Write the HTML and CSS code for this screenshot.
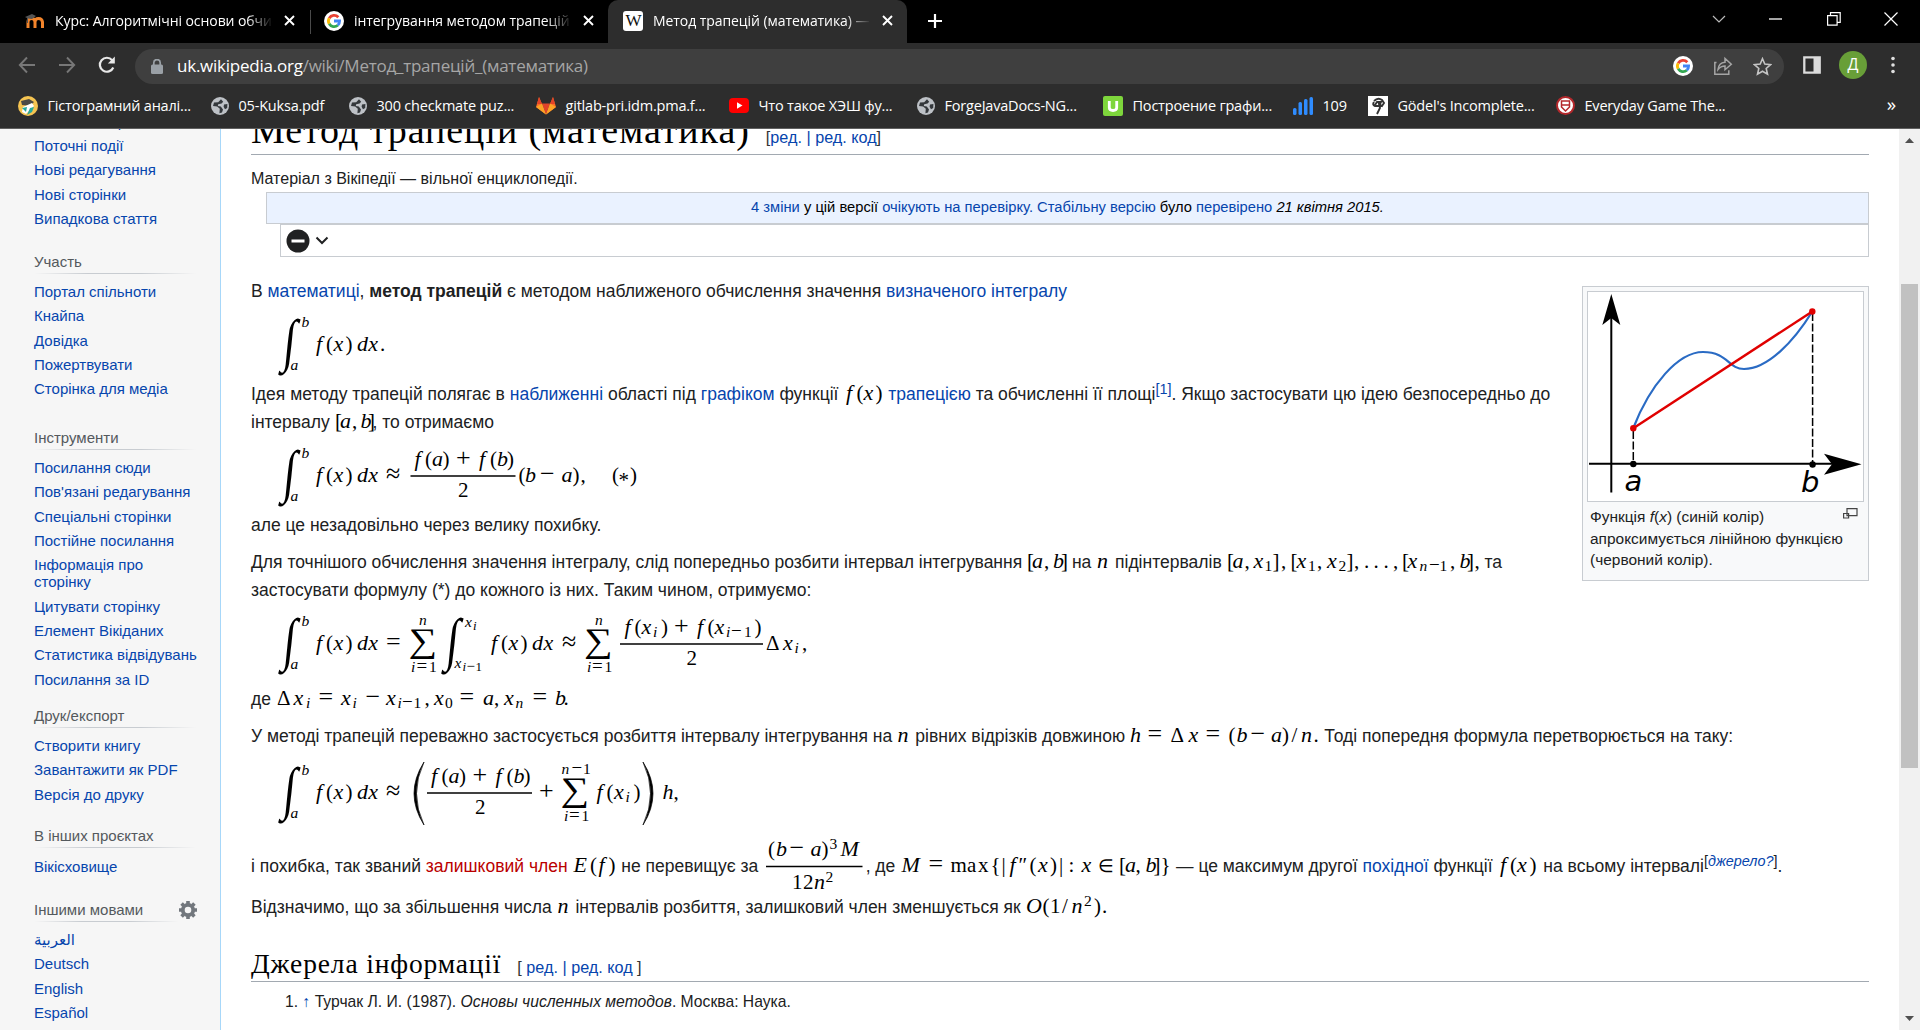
FILE: index.html
```html
<!DOCTYPE html>
<html lang="uk">
<head>
<meta charset="utf-8">
<title>Метод трапецій (математика) — Вікіпедія</title>
<link rel="stylesheet" href="styles.css">
</head>
<body>
<svg class="defs" width="0" height="0">
  <defs>
    <g id="google"><circle cx="10" cy="10" r="10" fill="#fff"/><g fill="none" stroke-width="2.8"><path d="M14.3 6.2A5.6 5.6 0 0 0 5.2 7.2" stroke="#ea4335"/><path d="M5.2 7.2a5.6 5.6 0 0 0 0 5.6" stroke="#fbbc05"/><path d="M5.2 12.8a5.6 5.6 0 0 0 8.6 1.4" stroke="#34a853"/><path d="M13.8 14.2A5.6 5.6 0 0 0 15.6 10H10" stroke="#4285f4"/></g></g>
    <g id="globe"><circle cx="9" cy="9" r="9" fill="#bdc1c6"/><path d="M10 2.2 7.2 5.2 3 5.6 2 9l4.2.6 2.6 2.2-.4 4.4 2.6-.6 1-3.2-2.2-2.8-3-.6.4-1.8 3.4-.6 1.6-1.8zM13 7.6l3.4-.6-.2 4-2.2 1.2-1.4-2.4z" fill="#34383c"/></g>
    <path id="cross" d="M1 1l9 9M10 1l-9 9" stroke="#fff" stroke-width="1.9" fill="none"/>
  </defs>
</svg>
<div class="window">
  <header class="tabs">
    <div class="tab">
      <svg class="fav" width="20" height="20" viewBox="0 0 20 20"><path d="M3 17v-6q0-3.500 3.500-3.500T10 11v6M10 11q0-3.500 3.500-3.500T17.500 11v6" fill="none" stroke="#f2842b" stroke-width="3"/><path d="M0 6l7-3 4 2-4 3-4-.5V12H2V7z" fill="#555"/></svg>
      <span class="tab-title">Курс: Алгоритмічні основи обчислень</span>
      <svg class="x" width="11" height="11"><use href="#cross"/></svg>
    </div>
    <div class="tab second">
      <svg class="fav" width="20" height="20"><use href="#google"/></svg>
      <span class="tab-title">інтегрування методом трапецій</span>
      <svg class="x" width="11" height="11"><use href="#cross"/></svg>
    </div>
    <div class="tab active">
      <span class="fav wiki">W</span>
      <span class="tab-title">Метод трапецій (математика) — Вікіпедія</span>
      <svg class="x" width="11" height="11"><use href="#cross"/></svg>
    </div>
    <svg class="plus" width="16" height="16" viewBox="0 0 16 16"><path d="M8 1v14M1 8h14" stroke="#fff" stroke-width="2.200"/></svg>
    <div class="controls">
      <svg width="14" height="14" viewBox="0 0 14 14"><path d="M1 4l6 6 6-6" fill="none" stroke="#bbb" stroke-width="1.200"/></svg>
      <svg width="14" height="14" viewBox="0 0 14 14"><path d="M0 7h13" stroke="#fff" stroke-width="1.300"/></svg>
      <svg width="14" height="14" viewBox="0 0 14 14"><path d="M.6 3.600h9.500v9.500H.6zM3.500 3.500V.6h9.700v9.700h-3" fill="none" stroke="#fff" stroke-width="1.200"/></svg>
      <svg width="14" height="14" viewBox="0 0 14 14"><path d="M.5.5l13 13M13.500.5l-13 13" stroke="#fff" stroke-width="1.200"/></svg>
    </div>
  </header>
  <div class="toolbar">
    <svg class="nav-ico" width="18" height="18" viewBox="0 0 18 18"><path d="M17 9H2M9 1.500 1.800 9 9 16.500" fill="none" stroke="#777" stroke-width="1.900"/></svg>
    <svg class="nav-ico" width="18" height="18" viewBox="0 0 18 18"><path d="M1 9h15M9 1.500 16.200 9 9 16.500" fill="none" stroke="#777" stroke-width="1.900"/></svg>
    <svg class="nav-ico" width="18" height="18" viewBox="0 0 18 18"><path d="M15.300 11.500A7 7 0 1 1 14.200 4.200" fill="none" stroke="#e8e8e8" stroke-width="2.200"/><path d="M16.800.5v7H9.800z" fill="#e8e8e8"/></svg>
    <div class="omnibox">
      <svg width="12" height="15" viewBox="0 0 12 15"><rect y="5.500" width="12" height="9.500" rx="1.500" fill="#9aa0a6"/><path d="M2.800 6V3.800a3.200 3.200 0 0 1 6.400 0V6" fill="none" stroke="#9aa0a6" stroke-width="1.700"/></svg>
      <span class="url"><b>uk.wikipedia.org</b>/wiki/Метод_трапецій_(математика)</span>
      <div class="omni-right">
        <svg width="20" height="20"><use href="#google"/></svg>
        <svg width="20" height="20" viewBox="0 0 20 20"><path d="M3.500 6.500H1.800v11.700h14v-4M5 13.500c.5-4.500 3-7 7-7.300V2.500l6.300 5.700-6.300 5.500V10c-3 0-5 1-7 3.500z" fill="none" stroke="#a5a5a5" stroke-width="1.500"/></svg>
        <svg width="19" height="19" viewBox="0 0 19 19"><path d="M9.500 1.700l2.300 5.400 5.800.5-4.400 3.900 1.300 5.700-5-3-5 3 1.300-5.700L1.400 7.600l5.800-.5z" fill="none" stroke="#c4c4c4" stroke-width="1.600"/></svg>
      </div>
    </div>
    <svg class="panel" width="18" height="18" viewBox="0 0 18 18"><path d="M1.300 1.300h15.400v15.400H1.300z" fill="none" stroke="#dcdcdc" stroke-width="2.300"/><path d="M10.500 1h6v16h-6z" fill="#dcdcdc"/></svg>
    <span class="avatar">Д</span>
    <svg class="dots" width="4" height="18" viewBox="0 0 4 18" fill="#e0e0e0"><circle cx="2" cy="2.500" r="1.800"/><circle cx="2" cy="9" r="1.800"/><circle cx="2" cy="15.500" r="1.800"/></svg>
  </div>
  <nav class="bookmarks">
    <a class="bm"><svg width="20" height="20" viewBox="0 0 20 20"><circle cx="10" cy="10" r="10" fill="#f5c451"/><path d="M3 5l8-2 5 3-4 4-8-1z" fill="#4b4a46"/><path d="M5 11l9-4 2 3-8 8-4-2z" fill="#fff"/><path d="M4 12l5-1-1 5zM12 12l4-1-2 5-5 3z" fill="#28a99c"/></svg><span>Гістограмний аналі...</span></a>
    <a class="bm"><svg width="18" height="18"><use href="#globe"/></svg><span>05-Kuksa.pdf</span></a>
    <a class="bm"><svg width="18" height="18"><use href="#globe"/></svg><span>300 checkmate puz...</span></a>
    <a class="bm"><svg width="20" height="19" viewBox="0 0 20 19"><path d="M10 18.500 0 11 3 1l3 7z" fill="#fc6d26"/><path d="M10 18.500 20 11 17 1l-3 7z" fill="#fc6d26"/><path d="M10 18.500 6 7.500h8z" fill="#e24329"/><path d="M0 11l6-3.500 4 11zM20 11l-6-3.500-4 11z" fill="#fca326"/><path d="M3 1l3 7H1zM17 1l2 7h-5z" fill="#e24329"/></svg><span>gitlab-pri.idm.pma.f...</span></a>
    <a class="bm"><svg width="20" height="15" viewBox="0 0 20 15"><rect width="20" height="15" rx="4" fill="#f00"/><path d="M8 4.200l5.500 3.300L8 10.800z" fill="#fff"/></svg><span>Что такое ХЭШ фу...</span></a>
    <a class="bm"><svg width="18" height="18"><use href="#globe"/></svg><span>ForgeJavaDocs-NG...</span></a>
    <a class="bm"><svg width="20" height="20" viewBox="0 0 20 20"><rect width="20" height="20" rx="2" fill="#7ed63c"/><path d="M6.300 5v6.500q0 3 3.700 3t3.700-3V5" fill="none" stroke="#fff" stroke-width="2.800"/></svg><span>Построение графи...</span></a>
    <a class="bm"><svg width="20" height="18" viewBox="0 0 20 18" fill="#2f8cff"><rect y="11" width="3.500" height="7" rx="1.500"/><rect x="5.500" y="5" width="3.500" height="13" rx="1.500"/><rect x="11" y="2" width="3.500" height="16" rx="1.500"/><rect x="16.500" width="3.500" height="18" rx="1.500"/></svg><span>109</span></a>
    <a class="bm"><svg width="20" height="20" viewBox="0 0 20 20"><path d="M0 0h20v20H0z" fill="#fff"/><path d="M6 5q4-4 8-1l2 3-2 3-3-2 1 4-3 6M6 6q-2 3 1 4h4l2-4-4 0-2 3" fill="none" stroke="#333" stroke-width="1.900"/></svg><span>Gödel's Incomplete...</span></a>
    <a class="bm"><svg width="19" height="19" viewBox="0 0 19 19"><circle cx="9.500" cy="9.500" r="8.500" fill="#fff" stroke="#b5282c" stroke-width="2"/><path d="M5.500 5h8v6l-4 4-4-4zM5 9h9" fill="none" stroke="#b5282c" stroke-width="1.500"/></svg><span>Everyday Game The...</span></a>
    <span class="more">»</span>
  </nav>
  <div class="page">
    <aside class="sidebar">
      <section class="s-main"><ul><li>Головна сторінка</li><li>Поточні події</li><li>Нові редагування</li><li>Нові сторінки</li><li>Випадкова стаття</li></ul></section>
      <section class="s-part"><h3>Участь</h3><ul><li>Портал спільноти</li><li>Кнайпа</li><li>Довідка</li><li>Пожертвувати</li><li>Сторінка для медіа</li></ul></section>
      <section class="s-tools"><h3>Інструменти</h3><ul><li>Посилання сюди</li><li>Пов'язані редагування</li><li>Спеціальні сторінки</li><li>Постійне посилання</li><li>Інформація про<br>сторінку</li><li>Цитувати сторінку</li><li>Елемент Вікіданих</li><li>Статистика відвідувань</li><li>Посилання за ID</li></ul></section>
      <section class="s-print"><h3>Друк/експорт</h3><ul><li>Створити книгу</li><li>Завантажити як PDF</li><li>Версія до друку</li></ul></section>
      <section class="s-other"><h3>В інших проєктах</h3><ul><li>Вікісховище</li></ul></section>
      <section class="s-lang"><h3>Іншими мовами</h3><svg class="gear" width="18" height="18" viewBox="-9 -9 18 18"><circle r="5.200" fill="none" stroke="#72777d" stroke-width="3.800"/><path d="M0-9V-6M0 6V9M-9 0H-6M6 0H9M-6.400-6.400-4.500-4.500M4.500 4.500 6.400 6.400M6.400-6.400 4.500-4.500M-4.500 4.500-6.400 6.400" stroke="#72777d" stroke-width="3.600"/></svg><ul><li class="ar" lang="ar">العربية</li><li>Deutsch</li><li>English</li><li>Español</li></ul></section>
    </aside>
    <main class="content">
      <h1>Метод трапецій (математика)<span class="edit">[<a>ред.</a><a class="sep"> | </a><a>ред. код</a>]</span></h1>
      <div class="site-sub">Матеріал з Вікіпедії — вільної енциклопедії.</div>
      <div class="review"><a>4 зміни</a> у цій версії <a>очікують на перевірку.</a> <a>Стабільну версію</a> було <a>перевірено</a> <i>21 квітня 2015.</i></div>
      <div class="rating"><svg width="24" height="24" viewBox="0 0 24 24"><circle cx="12" cy="12" r="11.500" fill="#202122"/><path d="M5.500 12h13" stroke="#fff" stroke-width="3"/></svg><svg class="chev" width="14" height="9" viewBox="0 0 14 9"><path d="M1.500 1.500 7 7l5.500-5.500" fill="none" stroke="#202122" stroke-width="2"/></svg></div>

      <figure class="thumb">
        <svg class="plot" width="277" height="211" viewBox="1588 292 275 209">
          <path d="M1611.300 310V492.500M1589 463.700H1840" stroke="#000" stroke-width="2"/>
          <path d="M1611.300 294l9 31-9-7-9 7zM1861.500 464.200l-37.500 10.500 8-10.500-8-10.500z"/>
          <path d="M1633.300 431V463M1812.600 313V464" stroke="#000" stroke-width="1.500" stroke-dasharray="8 2.500"/>
          <path d="M1633.300 428C1650 385 1678 352 1703 352S1728 369 1744 369C1768 369 1794 341 1812 312" fill="none" stroke="#2a6bc4" stroke-width="2.200"/>
          <path d="M1633.300 428.300 1812.300 311.500" stroke="#e00000" stroke-width="2.500"/>
          <g fill="#e00000"><circle cx="1633.300" cy="428.300" r="3.200"/><circle cx="1812.300" cy="311.500" r="3.200"/></g>
          <circle cx="1633.300" cy="464" r="3.200"/><circle cx="1812.600" cy="464.500" r="3.200"/>
          <text x="1624.500" y="490.500">a</text><text x="1801" y="491.500">b</text>
        </svg>
        <figcaption><svg class="enlarge" width="15" height="11" viewBox="0 0 15 11"><path d="M4 .6h10v7H4z M.6 5.500h5v4.500h-5z" fill="#f8f9fa" stroke="#444" stroke-width="1.200"/></svg>Функція <i>f</i>(<i>x</i>) (синій колір)<br>апроксимується лінійною функцією<br>(червоний колір).</figcaption>
      </figure>

      <p class="l p1">В <a>математиці</a>, <b>метод трапецій</b> є методом наближеного обчислення значення <a>визначеного інтегралу</a></p>

      <svg class="f" width="200" height="75" viewBox="251 -46 200 75">
        <g transform="translate(280 0)"><use href="#int"/></g>
        <text class="s" y="-24" x="301.500">b</text><text class="s" y="19" x="290.500">a</text>
        <text x="316 326 333.500 345.500 357 368.300 380">f<tspan>(</tspan>x<tspan>)</tspan>dx<tspan>.</tspan></text>
      </svg>

      <p class="l">Ідея методу трапецій полягає в <a>наближенні</a> області під <a>графіком</a> функції <svg class="m" width="40" height="20" viewBox="843.500 -15 40 20"><text x="846.500 857 864 876">f<tspan>(</tspan>x<tspan>)</tspan></text></svg> <a>трапецією</a> та обчисленні її площі<sup><a>[1]</a></sup>. Якщо застосувати цю ідею безпосередньо до</p>
      <p class="l">інтервалу <svg class="m" width="38" height="20" viewBox="336 -15 38 20"><text x="336 341 353 361.500 369"><tspan>[</tspan>a<tspan>,</tspan>b<tspan>]</tspan></text></svg>, то отримаємо</p>

      <svg class="f" width="420" height="75" viewBox="251 -46 420 75">
        <g transform="translate(280 0)"><use href="#int"/></g>
        <text class="s" y="-24" x="301.500">b</text><text class="s" y="19" x="290.500">a</text>
        <text x="316 326 333.500 345.500 357 368.300 386">f<tspan>(</tspan>x<tspan>)</tspan>dx<tspan class="o">≈</tspan></text>
        <text y="-16" x="414.500 425 432 442.500 456 479 490 497 507">f<tspan>(</tspan>a<tspan>)</tspan><tspan class="o">+</tspan>f<tspan>(</tspan>b<tspan>)</tspan></text>
        <path d="M410.500-6H515.500" stroke="#000" stroke-width="1.400"/>
        <text y="14.500" x="458"><tspan>2</tspan></text>
        <text x="518.500 525 540 561.500 572.500 580.500 612"><tspan>(</tspan>b<tspan class="o">−</tspan>a<tspan>),(</tspan></text><text y="5" x="618.500"><tspan>*</tspan></text><text x="630"><tspan>)</tspan></text>
      </svg>

      <p class="l">але це незадовільно через велику похибку.</p>
      <p class="l g9">Для точнішого обчислення значення інтегралу, слід попередньо розбити інтервал інтегрування <svg class="m" width="40" height="20" viewBox="1028 -15 40 20"><text x="1028 1033 1045 1054 1062"><tspan>[</tspan>a<tspan>,</tspan>b<tspan>]</tspan></text></svg> на <svg class="m" width="14" height="20" viewBox="1097 -15 14 20"><text x="1098">n</text></svg> підінтервалів <svg class="m" width="253" height="20" viewBox="1227.500 -15 253 20"><text x="1227.500 1233 1245 1254"><tspan>[</tspan>a<tspan>,</tspan>x</text><text class="s" y="3" x="1265"><tspan>1</tspan></text><text x="1273 1281.500 1291 1297"><tspan>],[</tspan>x</text><text class="s" y="3" x="1308.500"><tspan>1</tspan></text><text x="1317.500 1327.500"><tspan>,</tspan>x</text><text class="s" y="3" x="1339"><tspan>2</tspan></text><text x="1347 1354.500 1364.500 1374 1384 1393.500 1402.500 1408"><tspan>],...,[</tspan>x</text><text class="s" y="3" x="1420 1429.500 1440">n<tspan class="o">−</tspan><tspan>1</tspan></text><text x="1450.500 1460 1467.500 1475"><tspan>,</tspan>b<tspan>],</tspan></text></svg> та</p>
      <p class="l">застосувати формулу (*) до кожного із них. Таким чином, отримуємо:</p>

      <svg class="f" width="620" height="81" viewBox="251 -46 620 81">
        <g transform="translate(280 0)"><use href="#int"/></g>
        <text class="s" y="-24" x="301.500">b</text><text class="s" y="19" x="290.500">a</text>
        <text x="316 326 333.500 345.500 357 368.300 386">f<tspan>(</tspan>x<tspan>)</tspan>dx<tspan class="o">=</tspan></text>
        <text class="s" y="-25" x="419">n</text><use href="#sum" x="409.500"/><text class="s" y="21.500" x="411 416.500 429">i<tspan class="o">=</tspan><tspan>1</tspan></text>
        <g transform="translate(443 0)"><use href="#int"/></g>
        <text class="s" y="-23" x="465">x</text><text class="ss" y="-20.500" x="473">i</text>
        <text class="s" y="18" x="454.500">x</text><text class="ss" y="21" x="462.500 466.500 475.500">i<tspan class="o">−</tspan><tspan>1</tspan></text>
        <text x="491 501 508.500 520.500 532 543.500 562">f<tspan>(</tspan>x<tspan>)</tspan>dx<tspan class="o">≈</tspan></text>
        <text class="s" y="-25" x="595">n</text><use href="#sum" x="585"/><text class="s" y="21.500" x="587 592 604.500">i<tspan class="o">=</tspan><tspan>1</tspan></text>
        <text y="-16" x="624.500 634.500 641.500">f<tspan>(</tspan>x</text><text class="s" y="-13" x="653">i</text><text y="-16" x="661 674 697 707.500 714.500"><tspan>)</tspan><tspan class="o">+</tspan>f<tspan>(</tspan>x</text><text class="s" y="-13" x="726 731 744">i<tspan class="o">−</tspan><tspan>1</tspan></text><text y="-16" x="754.500"><tspan>)</tspan></text>
        <path d="M620-6H763" stroke="#000" stroke-width="1.400"/>
        <text y="14.500" x="686.500"><tspan>2</tspan></text>
        <text x="766 783"><tspan>Δ</tspan>x</text><text class="s" y="3" x="794.500">i</text><text x="802"><tspan>,</tspan></text>
      </svg>

      <p class="l">де <svg class="m" width="294" height="20" viewBox="276.500 -15 294 20"><text x="277.500 294"><tspan>Δ</tspan>x</text><text class="s" y="3" x="306.500">i</text><text x="319 341.500"><tspan class="o">=</tspan>x</text><text class="s" y="3" x="353">i</text><text x="366 386.500"><tspan class="o">−</tspan>x</text><text class="s" y="3" x="398 402.500 414">i<tspan class="o">−</tspan><tspan>1</tspan></text><text x="425 434.500"><tspan>,</tspan>x</text><text class="s" y="3" x="445.500"><tspan>0</tspan></text><text x="460 483.500 494.500 504.500"><tspan class="o">=</tspan>a<tspan>,</tspan>x</text><text class="s" y="3" x="516">n</text><text x="533 555.500 564"><tspan class="o">=</tspan>b<tspan>.</tspan></text></svg></p>
      <p class="l g9">У методі трапецій переважно застосується розбиття інтервалу інтегрування на <svg class="m" width="13.500" height="20" viewBox="897 -15 13.500 20"><text x="897.500">n</text></svg> рівних відрізків довжиною <svg class="m" width="189.500" height="20" viewBox="1129.500 -15 189.500 20"><text x="1129.500 1147 1170 1188 1205 1228 1236 1250 1270.500 1281.500 1291 1300.500 1313">h<tspan class="o">=</tspan><tspan>Δ</tspan>x<tspan class="o">=</tspan><tspan>(</tspan>b<tspan class="o">−</tspan>a<tspan>)/</tspan>n<tspan>.</tspan></text></svg> Тоді попередня формула перетворюється на таку:</p>

      <svg class="f" width="500" height="102" viewBox="251 -49 500 102">
        <defs>
          <g id="int"><text class="big int" transform="translate(2 8.500) skewX(-6) scale(.76 1)">∫</text></g>
          <text id="sum" class="big sum" transform="translate(-1 2.100) scale(1.250 1.070)">∑</text>
        </defs>
        <g transform="translate(280 0)"><use href="#int"/></g>
        <text class="s" y="-24" x="301.500">b</text><text class="s" y="19" x="290.500">a</text>
        <text x="316 326 333.500 345.500 357 368.300 386">f<tspan>(</tspan>x<tspan>)</tspan>dx<tspan class="o">≈</tspan></text>
        <path d="M424-37Q404-5.500 424 26Q409-5.500 424-37zM643-37Q663-5.500 643 26Q658-5.500 643-37z" stroke="#000" stroke-width=".7"/>
        <text y="-16" x="431 441.500 448.500 459 472.500 495.500 506.500 513.500 523.500">f<tspan>(</tspan>a<tspan>)</tspan><tspan class="o">+</tspan>f<tspan>(</tspan>b<tspan>)</tspan></text>
        <path d="M427-6H532" stroke="#000" stroke-width="1.400"/>
        <text y="14.500" x="475"><tspan>2</tspan></text>
        <text x="539"><tspan class="o">+</tspan></text>
        <text class="s" y="-25" x="561.500 571.500 583">n<tspan class="o">−</tspan><tspan>1</tspan></text><use href="#sum" x="561.500"/><text class="s" y="21.500" x="564 569 581.500">i<tspan class="o">=</tspan><tspan>1</tspan></text>
        <text x="596.500 606.500 614">f<tspan>(</tspan>x</text><text class="s" y="3" x="625.500">i</text><text x="633.500 662.500 673.500"><tspan>)</tspan>h<tspan>,</tspan></text>
      </svg>

      <p class="l">і похибка, так званий <a class="new">залишковий член</a> <svg class="m" width="44" height="20" viewBox="573.500 -15 44 20"><text x="574 590.500 599 609">E<tspan>(</tspan>f<tspan>)</tspan></text></svg> не перевищує за <svg class="m" width="102.500" height="20" viewBox="763.500 -15 102.500 20"><text y="-16" x="768.500 776.500 790 811 822"><tspan>(</tspan>b<tspan class="o">−</tspan>a<tspan>)</tspan></text><text class="s" y="-23.500" x="830"><tspan>3</tspan></text><text y="-16" x="841">M</text><path d="M766.500-5.500H863" stroke="#000" stroke-width="1.400"/><text y="16.500" x="792.500 803.500 814.500"><tspan>12</tspan>n</text><text class="s" y="10" x="826"><tspan>2</tspan></text></svg>, де <svg class="m" width="271" height="20" viewBox="900.500 -15 271 20"><text x="902 929 951 967.500 978.500 991 1002 1010 1019 1030 1038.500 1050.500 1059.500 1069 1082 1098 1119.500 1125.500 1136 1146 1154 1161">M<tspan class="o">=</tspan><tspan>max{|</tspan>f<tspan>″(</tspan>x<tspan>)|:</tspan>x<tspan class="e">∈</tspan><tspan>[</tspan>a<tspan>,</tspan>b<tspan>]}</tspan></text></svg> — це максимум другої <a>похідної</a> функції <svg class="m" width="41" height="20" viewBox="1498 -15 41 20"><text x="1501 1511 1518 1530.500">f<tspan>(</tspan>x<tspan>)</tspan></text></svg> на всьому інтервалі<sup class="src">[<a><i>джерело?</i></a>]</sup>.</p>
      <p class="l g13">Відзначимо, що за збільшення числа <svg class="m" width="14" height="20" viewBox="556.500 -15 14 20"><text x="557">n</text></svg> інтервалів розбиття, залишковий член зменшується як <svg class="m" width="84" height="20" viewBox="1024 -15 84 20"><text x="1024 1040.500 1048 1060 1069.500">O<tspan>(1/</tspan>n</text><text class="s" y="-7.500" x="1082"><tspan>2</tspan></text><text x="1092 1100"><tspan>).</tspan></text></svg></p>

      <h2>Джерела інформації<span class="edit">[ <a>ред.</a><a class="sep"> | </a><a>ред. код</a> ]</span></h2>
      <div class="ref"><span>1. <a>↑</a></span> Турчак Л. И. (1987). <i>Основы численных методов</i>. Москва: Наука.</div>
    </main>
    <div class="scroll">
      <svg width="9" height="5" viewBox="0 0 9 5"><path d="M0 5 4.500 0 9 5z" fill="#505050"/></svg>
      <div class="handle"></div>
      <svg width="9" height="5" viewBox="0 0 9 5"><path d="M0 0h9L4.500 5z" fill="#505050"/></svg>
    </div>
  </div>
</div>
</body>
</html>
```
FILE: styles.css
```css
* { box-sizing: border-box; }
body { margin: 0; background: #fff; overflow: hidden; font-family: "Liberation Sans", Arial, sans-serif; color: #202122; }
.defs { position: absolute; }
.window { width: 1920px; height: 1030px; display: flex; flex-direction: column; }
svg { flex: none; display: block; }

/* tab strip */
.tabs { height: 43px; background: #000; display: flex; align-items: center; font-family: "Open Sans", "Noto Sans", sans-serif; font-size: 14px; color: #fff; flex: none; }
.tab { height: 43px; width: 310px; padding: 0 14px 2px 25px; display: flex; align-items: center; flex: none; position: relative; }
.tab.second { width: 298px; padding-left: 14px; padding-right: 13px; }
.tab.second::before { content: ""; position: absolute; left: 0; top: 10px; width: 1px; height: 24px; background: #4a4a4a; }
.tab.active { width: 299px; padding-left: 15px; background: #2d2d2d; border-radius: 10px 10px 0 0; }
.fav { width: 20px; height: 20px; flex: none; }
.wiki { background: #fff; color: #111; border-radius: 3px; font: 17px/19px "Liberation Serif", serif; text-align: center; letter-spacing: -1px; }
.tab-title { margin-left: 10px; width: 218px; flex: none; overflow: hidden; white-space: nowrap; letter-spacing: -.07px; -webkit-mask-image: linear-gradient(90deg, #000 88%, transparent); mask-image: linear-gradient(90deg, #000 88%, transparent); }
.x { margin-left: 11px; }
.plus { margin-left: 20px; margin-bottom: 2px; }
.controls { margin-left: auto; display: flex; gap: 43.500px; margin-right: 22px; margin-bottom: 5px; }

/* address row */
.toolbar { height: 43px; background: #2d2d2d; display: flex; align-items: center; flex: none; padding-left: 18px; }
.nav-ico { margin-right: 22px; }
.nav-ico:nth-child(3) { margin-right: 19px; }
.omnibox { width: 1649px; height: 35px; margin-top: 3px; border-radius: 18px; background: #3f3f3f; display: flex; align-items: center; padding: 0 12px 0 16px; font-family: "Open Sans", "Noto Sans", sans-serif; font-size: 17px; letter-spacing: -.24px; }
.url { color: #a6a6a6; margin-left: 14px; margin-bottom: 2px; white-space: nowrap; }
.url b { font-weight: 400; color: #fff; }
.omni-right { margin-left: auto; display: flex; gap: 20px; align-items: center; }
.panel { margin-left: 19px; }
.avatar { margin-left: 18px; width: 28px; height: 28px; border-radius: 50%; background: #689f38; color: #fff; font: 16px/27px "Open Sans", sans-serif; text-align: center; }
.dots { margin-left: 24px; }

/* bookmarks */
.bookmarks { height: 43px; background: #2d2d2d; border-bottom: 1px solid #606060; display: flex; align-items: center; padding: 0 24px 3px 18px; font-family: "Open Sans", "Noto Sans", sans-serif; font-size: 14.500px; letter-spacing: -.2px; color: #fff; flex: none; }
.bm { display: flex; align-items: center; white-space: nowrap; flex: none; width: 193px; color: #fff; }
.bm svg { margin-right: 9.500px; }
.bm:nth-child(2) { width: 138px; }
.bm:nth-child(3) { width: 187px; }
.bm:nth-child(4) { width: 193px; }
.bm:nth-child(5) { width: 188px; }
.bm:nth-child(6) { width: 186px; }
.bm:nth-child(7) { width: 190px; }
.bm:nth-child(8) { width: 75px; }
.bm:nth-child(9) { width: 188px; }
.bm:nth-child(10) { width: 170px; }
.more { margin-left: auto; font-size: 19px; margin-bottom: 4px; }

/* page */
.page { flex: 1; min-height: 0; display: flex; overflow: hidden; }
a { color: #0645ad; }
.sidebar { width: 221px; flex: none; background: #f6f6f6; border-right: 1px solid #a7d7f9; padding-left: 34px; font-size: 15px; overflow: hidden; }
.sidebar ul { list-style: none; margin: 0; padding: 6.500px 0 0; }
.sidebar li { line-height: 16.875px; padding: 3.750px 0; color: #0645ad; white-space: nowrap; }
.sidebar section { position: relative; }
.sidebar h3 { margin: 0; height: 22px; width: 162px; font-size: 15px; line-height: 19px; font-weight: 400; color: #54595d; background: linear-gradient(90deg, rgba(200,204,209,0), #c8ccd1 33%, #c8ccd1 66%, rgba(200,204,209,0)) no-repeat 0 100% / 100% 1px; }
.s-main { margin-top: -25.700px; }
.s-part { margin-top: 20px; }
.s-tools { margin-top: 25.500px; }
.s-print { margin-top: 13.500px; }
.s-other { margin-top: 19px; }
.s-lang { margin-top: 20.500px; }
.s-lang h3 { width: 145px; }
.gear { position: absolute; right: 23px; top: 1px; }
.ar { font-family: "DejaVu Sans", sans-serif; font-size: 15px; }

.content { width: 1678px; flex: none; padding: 0 30px 0 30px; overflow: hidden; background: #fff; }
h1, h2 { font-family: "Liberation Serif", serif; font-weight: 400; color: #000; border-bottom: 1px solid #a2a9b1; white-space: nowrap; margin: 0; }
h1 { font-size: 38px; line-height: 40px; height: 45px; margin-top: -19px; letter-spacing: .95px; }
h2 { font-size: 27.500px; line-height: 30px; height: 33px; margin-top: 28px; letter-spacing: .85px; }
.edit { font-family: "Liberation Sans", sans-serif; font-size: 16.200px; margin-left: 16px; color: #333; letter-spacing: 0; }
.site-sub { margin-top: 11px; font-size: 16.050px; line-height: 24px; height: 26px; }
.review { margin-left: 15px; height: 32px; border: 1px solid #c8ccd1; background: #eaf2ff; text-align: center; font-size: 14.730px; line-height: 29px; color: #000; }
.rating { margin-left: 29px; height: 33px; border: 1px solid #c8ccd1; display: flex; align-items: center; padding-left: 5px; }
.chev { margin-left: 5px; }

.l { margin: 0; height: 28px; line-height: 28px; font-size: 17.500px; white-space: nowrap; }
.p1 { margin-top: 20px; }
.g9 { margin-top: 9px; }
.g13 { margin-top: 13px; }
.new { color: #ba0000; }
sup { font-size: 14.400px; line-height: 1; vertical-align: 6px; }

/* formulas: baseline of every formula is y = 0 */
.m, .f { overflow: visible; font-family: "Liberation Serif", serif; font-size: 22px; font-style: italic; color: #000; }
.m { display: inline-block; vertical-align: -5px; }
.f tspan, .m tspan { font-style: normal; font-size: 21px; }
.f .o, .m .o { font-size: 26px; }
.m .e { font-size: 18px; }
.f .s, .m .s, .f .s tspan, .m .s tspan { font-size: 15.500px; }
.f .s .o, .m .s .o { font-size: 19px; }
.f .ss, .f .ss tspan { font-size: 13px; }
.f .ss .o { font-size: 15px; }
.big { font-style: normal; }
.int { font-size: 58px; }
.sum { font-size: 32px; }

.thumb { float: right; width: 287px; height: 295px; margin: 29px 0 0; border: 1px solid #c8ccd1; background: #f8f9fa; padding: 4px; }
.plot { border: 1px solid #c8ccd1; background: #fff; font: italic 29px "DejaVu Sans", sans-serif; }
figcaption { padding: 4px 3px; font-size: 15.460px; line-height: 21.650px; white-space: nowrap; }
.enlarge { float: right; margin: 2px 3px 0 0; }

.ref { margin: 8px 0 0 34px; font-size: 15.700px; line-height: 24px; white-space: nowrap; }

/* scrollbar */
.scroll { flex: 1; background: #f1f1f1; display: flex; flex-direction: column; align-items: center; padding: 9px 0; }
.handle { width: 17px; height: 484px; background: #c1c1c1; margin: 141px 0 auto; }
```
